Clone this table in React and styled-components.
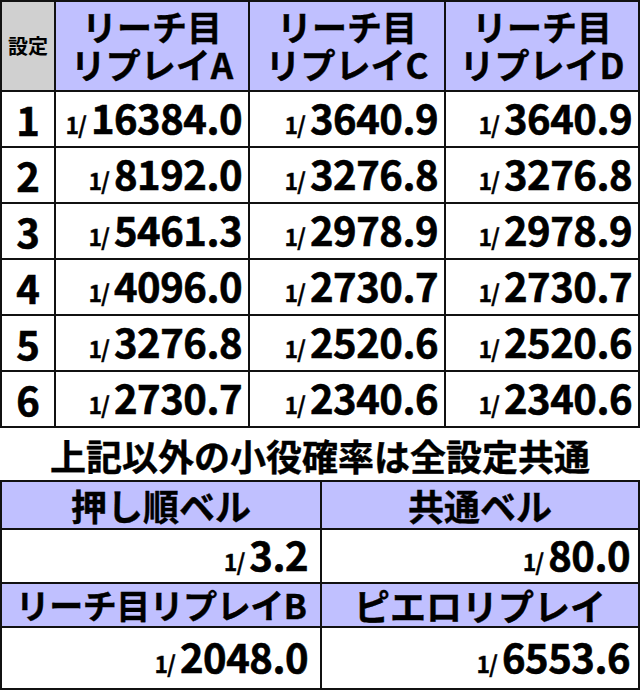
import React from "react";
import styled, { createGlobalStyle } from "styled-components";

const Global = createGlobalStyle`
  html, body { margin: 0; padding: 0; background: #fff; }
  body { font-family: "Noto Sans CJK JP", "Noto Sans", sans-serif; color: #000; }
  * { box-sizing: border-box; }
`;

const Page = styled.div`
  width: 640px;
  display: flex;
  flex-direction: column;
`;

const Grid = styled.div`
  display: grid;
  grid-template-columns: ${(p) => p.$cols};
  border-left: 2px solid #111;
  border-top: 2px solid #111;
`;

const Cell = styled.div`
  border-right: 2px solid #111;
  border-bottom: 2px solid #111;
  background: ${(p) => (p.$tone === "head" ? "#c0c0ff" : p.$tone === "gray" ? "#d0d0d0" : "#fff")};
  display: flex;
  align-items: center;
  justify-content: ${(p) => p.$justify || "center"};
  padding: ${(p) => p.$pad || "0"};
  height: ${(p) => p.$h || "auto"};
`;

const HeadText = styled.div`
  font-weight: 700;
  font-size: 35px;
  line-height: 38px;
  text-align: center;
  padding-bottom: 3px;
  -webkit-text-stroke: 0.4px #000;
`;

const SmallHead = styled.div`
  font-weight: 700;
  font-size: 20px;
  line-height: 22px;
`;

const RowNum = styled.div`
  font-weight: 700;
  font-size: 40px;
  line-height: 1;
  -webkit-text-stroke: 0.6px #000;
`;

const Value = styled.div`
  display: flex;
  align-items: baseline;
  font-weight: 700;
  white-space: nowrap;
`;

const Frac = styled.span`
  font-size: 23px;
  margin-right: 5px;
  letter-spacing: -1px;
  -webkit-text-stroke: 0.3px #000;
`;

const Num = styled.span`
  font-size: 40px;
  line-height: 1;
  letter-spacing: -0.5px;
  -webkit-text-stroke: 0.6px #000;
`;

const Note = styled.div`
  height: 52px;
  display: flex;
  align-items: center;
  justify-content: center;
  font-weight: 700;
  font-size: 36px;
  line-height: 1;
  padding-top: 2px;
  -webkit-text-stroke: 0.4px #000;
`;

const BottomHead = styled.div`
  font-weight: 700;
  font-size: ${(p) => (p.$tight ? "34px" : "36px")};
  letter-spacing: ${(p) => (p.$tight ? "-0.5px" : "0")};
  line-height: 1;
  -webkit-text-stroke: 0.4px #000;
`;

const rows = [
  ["1", "16384.0", "3640.9", "3640.9"],
  ["2", "8192.0", "3276.8", "3276.8"],
  ["3", "5461.3", "2978.9", "2978.9"],
  ["4", "4096.0", "2730.7", "2730.7"],
  ["5", "3276.8", "2520.6", "2520.6"],
  ["6", "2730.7", "2340.6", "2340.6"],
];

const Prob = ({ v }) => (
  <Value>
    <Frac>1/</Frac>
    <Num>{v}</Num>
  </Value>
);

export default function App() {
  return (
    <Page>
      <Global />
      <Grid $cols="54px 194px 196px 194px">
        <Cell $tone="gray" $h="90px">
          <SmallHead>設定</SmallHead>
        </Cell>
        {["A", "C", "D"].map((l) => (
          <Cell key={l} $tone="head" $h="90px">
            <HeadText>
              リーチ目
              <br />
              リプレイ{l}
            </HeadText>
          </Cell>
        ))}
        {rows.map((r) => (
          <React.Fragment key={r[0]}>
            <Cell $h="56px">
              <RowNum>{r[0]}</RowNum>
            </Cell>
            {r.slice(1).map((v, i) => (
              <Cell key={i} $h="56px" $justify="flex-end" $pad="0 6px 0 0">
                <Prob v={v} />
              </Cell>
            ))}
          </React.Fragment>
        ))}
      </Grid>
      <Note>上記以外の小役確率は全設定共通</Note>
      <Grid $cols="320px 318px">
        <Cell $tone="head" $h="48px">
          <BottomHead>押し順ベル</BottomHead>
        </Cell>
        <Cell $tone="head" $h="48px">
          <BottomHead>共通ベル</BottomHead>
        </Cell>
        <Cell $h="54px" $justify="flex-end" $pad="0 12px 0 0">
          <Prob v="3.2" />
        </Cell>
        <Cell $h="54px" $justify="flex-end" $pad="0 8px 0 0">
          <Prob v="80.0" />
        </Cell>
        <Cell $tone="head" $h="44px">
          <BottomHead $tight>リーチ目リプレイB</BottomHead>
        </Cell>
        <Cell $tone="head" $h="44px">
          <BottomHead>ピエロリプレイ</BottomHead>
        </Cell>
        <Cell $h="62px" $justify="flex-end" $pad="0 12px 0 0">
          <Prob v="2048.0" />
        </Cell>
        <Cell $h="62px" $justify="flex-end" $pad="0 8px 0 0">
          <Prob v="6553.6" />
        </Cell>
      </Grid>
    </Page>
  );
}
